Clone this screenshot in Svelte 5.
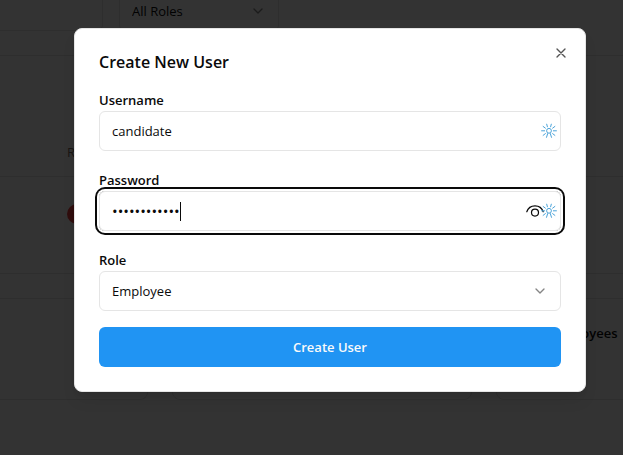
<script>
  let username = $state('candidate');
  let password = $state('candidate123');
  let role = $state('Employee');
  let filter = $state('All Roles');
</script>

{#snippet chevron()}
  <svg class="chevron" width="16" height="16" viewBox="0 0 24 24" aria-hidden="true">
    <path d="m6 9 6 6 6-6" />
  </svg>
{/snippet}

{#snippet spark()}
  <svg class="spark" width="16" height="16" viewBox="0 0 16 16" aria-hidden="true">
    <circle cx="8" cy="7.8" r="2.4" />
    <path d="M6.8 10.2 5.4 14.7M9.2 10.2l1.4 4.5M5.6.8l.9 3.4M10.4.8l-.9 3.4M1.8 3.2l2.9 2.2M14.2 3.2l-2.9 2.2M.2 7.8h3.8M12 7.8h3.8M1.8 12.6l2.9-2.2M14.2 12.6l-2.9-2.2" />
  </svg>
{/snippet}

<div class="screen">
  <div class="page" inert>
    <div class="filters">
      <input class="search" aria-label="Search users" />
      <div class="control filter">
        <select aria-label="Filter by role" bind:value={filter}>
          <option>All Roles</option>
        </select>
        {@render chevron()}
      </div>
    </div>
    <table>
      <thead><tr><th>Role</th></tr></thead>
      <tbody><tr><td><span class="pill">Admin</span></td></tr></tbody>
    </table>
    <div class="stats">
      <section></section>
      <section></section>
      <section><h3>Total Employees</h3></section>
    </div>
  </div>

  <div class="overlay">
    <div class="dialog" role="dialog" aria-modal="true" aria-labelledby="dialog-title">
      <h2 id="dialog-title">Create New User</h2>
      <button class="close" type="button" aria-label="Close">
        <svg width="16" height="16" viewBox="0 0 24 24" aria-hidden="true">
          <path d="M18 6 6 18M6 6l12 12" />
        </svg>
      </button>
      <form onsubmit={(e) => e.preventDefault()}>
        <div class="field">
          <label for="username">Username</label>
          <div class="control">
            <input id="username" type="text" bind:value={username} />
            <span class="icons">{@render spark()}</span>
          </div>
        </div>
        <div class="field">
          <label for="password">Password</label>
          <div class="control active">
            <input id="password" type="password" autocomplete="off" bind:value={password} />
            <span class="caret"></span>
            <span class="icons">
              <svg class="eye" width="18" height="16" viewBox="0 0 18 16" aria-hidden="true">
                <path d="M.8 8.8C2 5 5 2.8 9 2.8s7 2.2 8.2 6" />
                <circle cx="9" cy="9.6" r="3.5" />
              </svg>
              {@render spark()}
            </span>
          </div>
        </div>
        <div class="field">
          <label for="role">Role</label>
          <div class="control">
            <select id="role" bind:value={role}>
              <option>Employee</option>
              <option>Admin</option>
            </select>
            {@render chevron()}
          </div>
        </div>
        <button class="submit" type="submit">Create User</button>
      </form>
    </div>
  </div>
</div>

<style>
  :global(body) {
    margin: 0;
    background: #fff;
  }
  .screen, .screen * {
    box-sizing: border-box;
  }
  .screen {
    position: relative;
    min-height: 100vh;
    overflow: hidden;
    font: 13px/24px "Segoe UI", "Open Sans", "Noto Sans", sans-serif;
    color: #0a0a0a;
  }
  h2, h3 {
    margin: 0;
    font-weight: 600;
  }
  input, select, button {
    font: inherit;
    color: inherit;
  }
  svg {
    display: block;
    fill: none;
    stroke: currentColor;
    stroke-width: 2;
    stroke-linecap: round;
    stroke-linejoin: round;
  }
  .control {
    position: relative;
  }
  input, select {
    display: block;
    width: 100%;
    height: 40px;
    margin: 0;
    padding: 0 12px;
    border: 1px solid #e5e5e5;
    border-radius: 6px;
    background: #fff;
    outline: none;
    appearance: none;
  }
  input[type="password"] {
    font-size: 15px;
  }
  .chevron {
    position: absolute;
    top: 12px;
    right: 13px;
    color: #858585;
    pointer-events: none;
  }

  /* Page behind the dialog */
  .page {
    position: absolute;
    inset: 0;
  }
  .filters {
    display: flex;
    align-items: flex-end;
    gap: 16px;
    height: 56px;
    padding-bottom: 24px;
    border-bottom: 1px solid #e5e5e5;
  }
  .search {
    width: 103px;
    border-left: 0;
    border-radius: 0 6px 6px 0;
  }
  .filter {
    width: 160px;
  }
  table {
    width: 100%;
    margin-top: 72px;
    border-collapse: collapse;
  }
  th, td {
    padding: 0 0 0 67px;
    border-bottom: 1px solid #e5e5e5;
    text-align: left;
  }
  th {
    height: 48px;
    font-weight: 400;
    color: #7c6f64;
  }
  td {
    height: 97px;
    padding-bottom: 24px;
  }
  .pill {
    display: inline-block;
    padding: 0 10px;
    border-radius: 10px;
    background: #ef4444;
    color: #fff;
    font-size: 12px;
    line-height: 20px;
  }
  .stats {
    display: grid;
    grid-template-columns: 148px 300px 300px;
    gap: 24px;
    margin-top: 24px;
  }
  .stats section {
    height: 102px;
    padding: 22px 18px;
    border: 1px solid #e5e5e5;
    border-radius: 8px;
  }
  .stats section:first-child {
    border-left: 0;
    border-radius: 0 8px 8px 0;
  }
  h3 {
    font-size: 13px;
  }

  /* Dialog */
  .overlay {
    position: relative;
    min-height: 100vh;
    padding: 28px 37px 28px 74px;
    background: rgb(0 0 0 / 80%);
  }
  .dialog {
    position: relative;
    padding: 24px;
    border: 1px solid #e5e5e5;
    border-radius: 8px;
    background: #fff;
    box-shadow: 0 10px 15px -3px rgb(0 0 0 / 10%), 0 4px 6px -4px rgb(0 0 0 / 10%);
  }
  h2 {
    font-size: 16px;
    line-height: 18px;
  }
  .close {
    position: absolute;
    top: 16px;
    right: 16px;
    padding: 0;
    border: 0;
    background: none;
    color: #545454;
  }
  form {
    display: grid;
    gap: 16px;
    margin-top: 16px;
  }
  label {
    display: block;
    padding-top: 2px;
    line-height: 22px;
    font-weight: 600;
  }
  .active {
    border-radius: 6px;
    box-shadow: 0 0 0 2px #fff, 0 0 0 4px #0a0a0a;
  }
  .caret {
    position: absolute;
    top: 11px;
    left: 81px;
    width: 1px;
    height: 19px;
    background: #0a0a0a;
  }
  .icons {
    position: absolute;
    top: 12px;
    right: 4px;
    display: flex;
  }
  .spark {
    color: #4ba3d9;
    stroke-width: 1;
    stroke-linecap: butt;
  }
  .eye {
    margin-right: -3px;
    stroke-width: 1.2;
  }
  .submit {
    height: 40px;
    padding: 0;
    border: 0;
    border-radius: 6px;
    background: #2094f3;
    color: #fafafa;
    font-weight: 600;
  }
</style>
